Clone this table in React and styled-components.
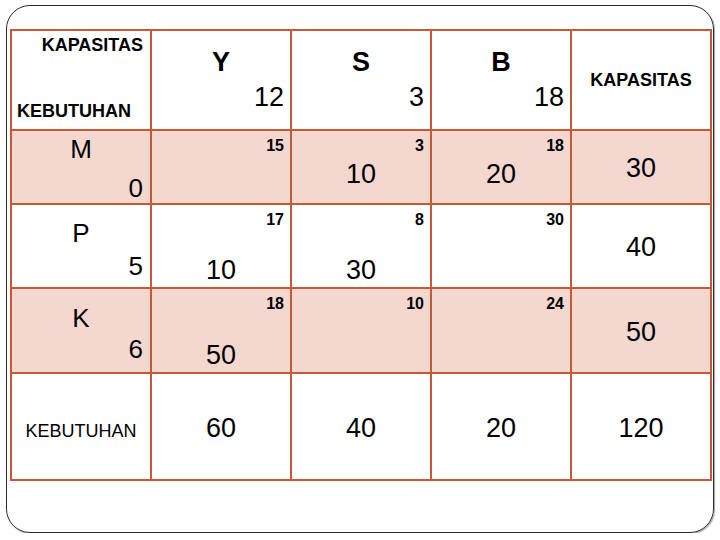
import { Fragment } from "react";
import styled, { createGlobalStyle } from "styled-components";

const GlobalStyle = createGlobalStyle`
  html, body {
    margin: 0;
    padding: 0;
    background: #fff;
  }
  body {
    font-family: "Liberation Sans", Arial, sans-serif;
    color: #000;
  }
`;

const LINE = "#c55a34";
const PINK = "#f4d8d0";

// styles
const Slide = styled.div`
  box-sizing: border-box;
  width: 708px;
  height: 528px;
  margin: 5px 0 0 6px;
  padding: 23px 3px 0;
  border: 1px solid #2a2a2a;
  border-radius: 24px;
  box-shadow: 1px 1px 1px rgba(0, 0, 0, 0.35);
`;

const Table = styled.div`
  display: grid;
  grid-template-columns: repeat(5, 138px);
  grid-template-rows: 98px 72px 82px 83px 105px;
  gap: 2px;
  padding: 2px;
  width: fit-content;
  background: ${LINE};
`;

const Cell = styled.div`
  background: ${(p) => (p.$pink ? PINK : "#fff")};
  display: flex;
  flex-direction: column;
  line-height: 1;
`;

const Corner = styled(Cell)`
  justify-content: space-between;
  padding: 5px 7px 9px 5px;
  font-size: 18px;
  font-weight: bold;
  & > span:first-child {
    align-self: flex-end;
  }
`;

const ColHead = styled(Cell)`
  align-items: center;
  padding: 18px 6px 0;
`;

const ColName = styled.span`
  font-size: 27px;
  font-weight: bold;
`;

const ColCost = styled.span`
  align-self: flex-end;
  margin-top: 8px;
  font-size: 27px;
`;

const CapHead = styled(Cell)`
  align-items: center;
  justify-content: center;
  font-size: 18px;
  font-weight: bold;
`;

const RowHead = styled(Cell)`
  justify-content: space-between;
  align-items: center;
  padding: ${(p) => p.$pad};
  font-size: 26px;
  & > span:last-child {
    align-self: flex-end;
  }
`;

const DataCell = styled(Cell)`
  justify-content: space-between;
  align-items: center;
  padding: 7px 6px ${(p) => p.$bottom}px;
`;

const Cost = styled.span`
  align-self: flex-end;
  font-size: 16px;
  font-weight: bold;
`;

const Alloc = styled.span`
  font-size: 27px;
`;

const Total = styled(Cell)`
  align-items: center;
  justify-content: center;
  padding-top: ${(p) => p.$shift || 0}px;
  font-size: ${(p) => p.$size || 27}px;
`;

const columns = [
  { name: "Y", cost: 12 },
  { name: "S", cost: 3 },
  { name: "B", cost: 18 },
];

const rows = [
  {
    name: "M",
    supply: 0,
    pink: true,
    pad: "5px 7px 2px",
    allocBottom: 15,
    cells: [{ cost: 15 }, { cost: 3, alloc: 10 }, { cost: 18, alloc: 20 }],
    capacity: 30,
  },
  {
    name: "P",
    supply: 5,
    pink: false,
    pad: "15px 7px 8px",
    allocBottom: 3,
    cells: [{ cost: 17, alloc: 10 }, { cost: 8, alloc: 30 }, { cost: 30 }],
    capacity: 40,
  },
  {
    name: "K",
    supply: 6,
    pink: true,
    pad: "16px 7px 10px",
    allocBottom: 3,
    cells: [{ cost: 18, alloc: 50 }, { cost: 10 }, { cost: 24 }],
    capacity: 50,
  },
];

const demand = [60, 40, 20];

function App() {
  const total = rows.reduce((acu, r) => acu + r.capacity, 0);

  return (
    <>
      <GlobalStyle />
      <Slide>
        <Table>
          <Corner>
            <span>KAPASITAS</span>
            <span>KEBUTUHAN</span>
          </Corner>
          {columns.map((c) => (
            <ColHead key={c.name}>
              <ColName>{c.name}</ColName>
              <ColCost>{c.cost}</ColCost>
            </ColHead>
          ))}
          <CapHead>KAPASITAS</CapHead>

          {rows.map((r) => (
            <Fragment key={r.name}>
              <RowHead $pink={r.pink} $pad={r.pad}>
                <span>{r.name}</span>
                <span>{r.supply}</span>
              </RowHead>
              {r.cells.map((cell, i) => (
                <DataCell key={i} $pink={r.pink} $bottom={r.allocBottom}>
                  <Cost>{cell.cost}</Cost>
                  <Alloc>{cell.alloc ?? ""}</Alloc>
                </DataCell>
              ))}
              <Total $pink={r.pink} $shift={3}>
                {r.capacity}
              </Total>
            </Fragment>
          ))}

          <Total $size={18} $shift={9}>KEBUTUHAN</Total>
          {demand.map((d, i) => (
            <Total key={i} $shift={3}>
              {d}
            </Total>
          ))}
          <Total $shift={3}>{total}</Total>
        </Table>
      </Slide>
    </>
  );
}

export default App;
